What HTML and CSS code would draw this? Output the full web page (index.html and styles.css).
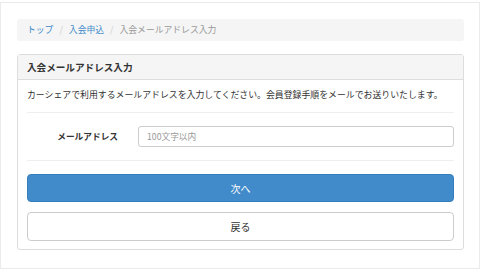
FILE: index.html
```html
<!DOCTYPE html>
<html lang="ja">
<head>
<meta charset="utf-8">
<link rel="stylesheet" href="styles.css">
</head>
<body>
<div class="frame">
  <ol class="breadcrumb">
    <li><a href="#">トップ</a></li>
    <li class="sep">/</li>
    <li><a href="#">入会申込</a></li>
    <li class="sep">/</li>
    <li class="active">入会メールアドレス入力</li>
  </ol>
  <div class="panel">
    <div class="panel-heading">入会メールアドレス入力</div>
    <div class="panel-body">
      <p class="intro">カーシェアで利用するメールアドレスを入力してください。会員登録手順をメールでお送りいたします。</p>
      <div class="rule"></div>
      <div class="form-row">
        <label class="label">メールアドレス</label>
        <div class="input"><span class="placeholder">100文字以内</span></div>
      </div>
      <div class="rule"></div>
      <button class="btn btn-primary">次へ</button>
      <button class="btn btn-default">戻る</button>
    </div>
  </div>
</div>
</body>
</html>
```
FILE: styles.css
```css
* { box-sizing: border-box; }
html, body { margin: 0; padding: 0; background: #fff; }
body {
  font-family: "Noto Sans CJK JP", "Noto Sans", sans-serif;
  color: #333;
  font-size: 8.85px;
  padding-top: 2px;
}
.frame {
  width: 480px;
  height: 267px;
  border: 1px solid #ebebeb;
  padding: 16px 15px 0 16px;
  display: flex;
  flex-direction: column;
}
.breadcrumb {
  list-style: none;
  margin: 0;
  height: 22px;
  padding: 0 10px;
  background: #f5f5f5;
  border-radius: 3px;
  display: flex;
  align-items: center;
  font-size: 8.8px;
  line-height: 1;
}
.breadcrumb a { color: #428bca; text-decoration: none; }
.breadcrumb .sep { color: #ccc; padding: 0 6px; }
.breadcrumb .active { color: #999; }
.panel {
  margin-top: 13px;
  border: 1px solid #ddd;
  border-radius: 3px;
  display: flex;
  flex-direction: column;
}
.panel-heading {
  height: 25px;
  background: #f5f5f5;
  border-bottom: 1px solid #ddd;
  padding: 0 9px;
  display: flex;
  align-items: center;
  font-weight: bold;
  font-size: 9.6px;
  color: #333;
}
.panel-body {
  padding: 8px 9px 8px 9px;
  display: flex;
  flex-direction: column;
}
.intro {
  margin: 0;
  line-height: 13px;
  height: 13px;
  white-space: nowrap;
  font-size: 8.9px;
}
.rule {
  height: 1px;
  background: #eee;
  margin-top: 11px;
}
.form-row {
  display: flex;
  align-items: center;
  gap: 20px;
  height: 47px;
  margin-bottom: -11px;
}
.label {
  width: 91px;
  text-align: right;
  font-weight: bold;
  font-size: 8.7px;
}
.input {
  flex: 1;
  height: 21px;
  border: 1px solid #ccc;
  border-radius: 3px;
  padding: 0 8px;
  display: flex;
  align-items: center;
  font-size: 8.7px;
}
.placeholder { color: #999; }
.btn {
  font-family: inherit;
  font-size: 10px;
  border-radius: 4px;
  width: 100%;
  cursor: pointer;
  padding: 0;
}
.btn-primary {
  margin-top: 13px;
  height: 28px;
  background: #428bca;
  border: 1px solid #357ebd;
  color: #fff;
}
.btn-default {
  margin-top: 10px;
  height: 29px;
  background: #fff;
  border: 1px solid #ccc;
  color: #333;
}
```
